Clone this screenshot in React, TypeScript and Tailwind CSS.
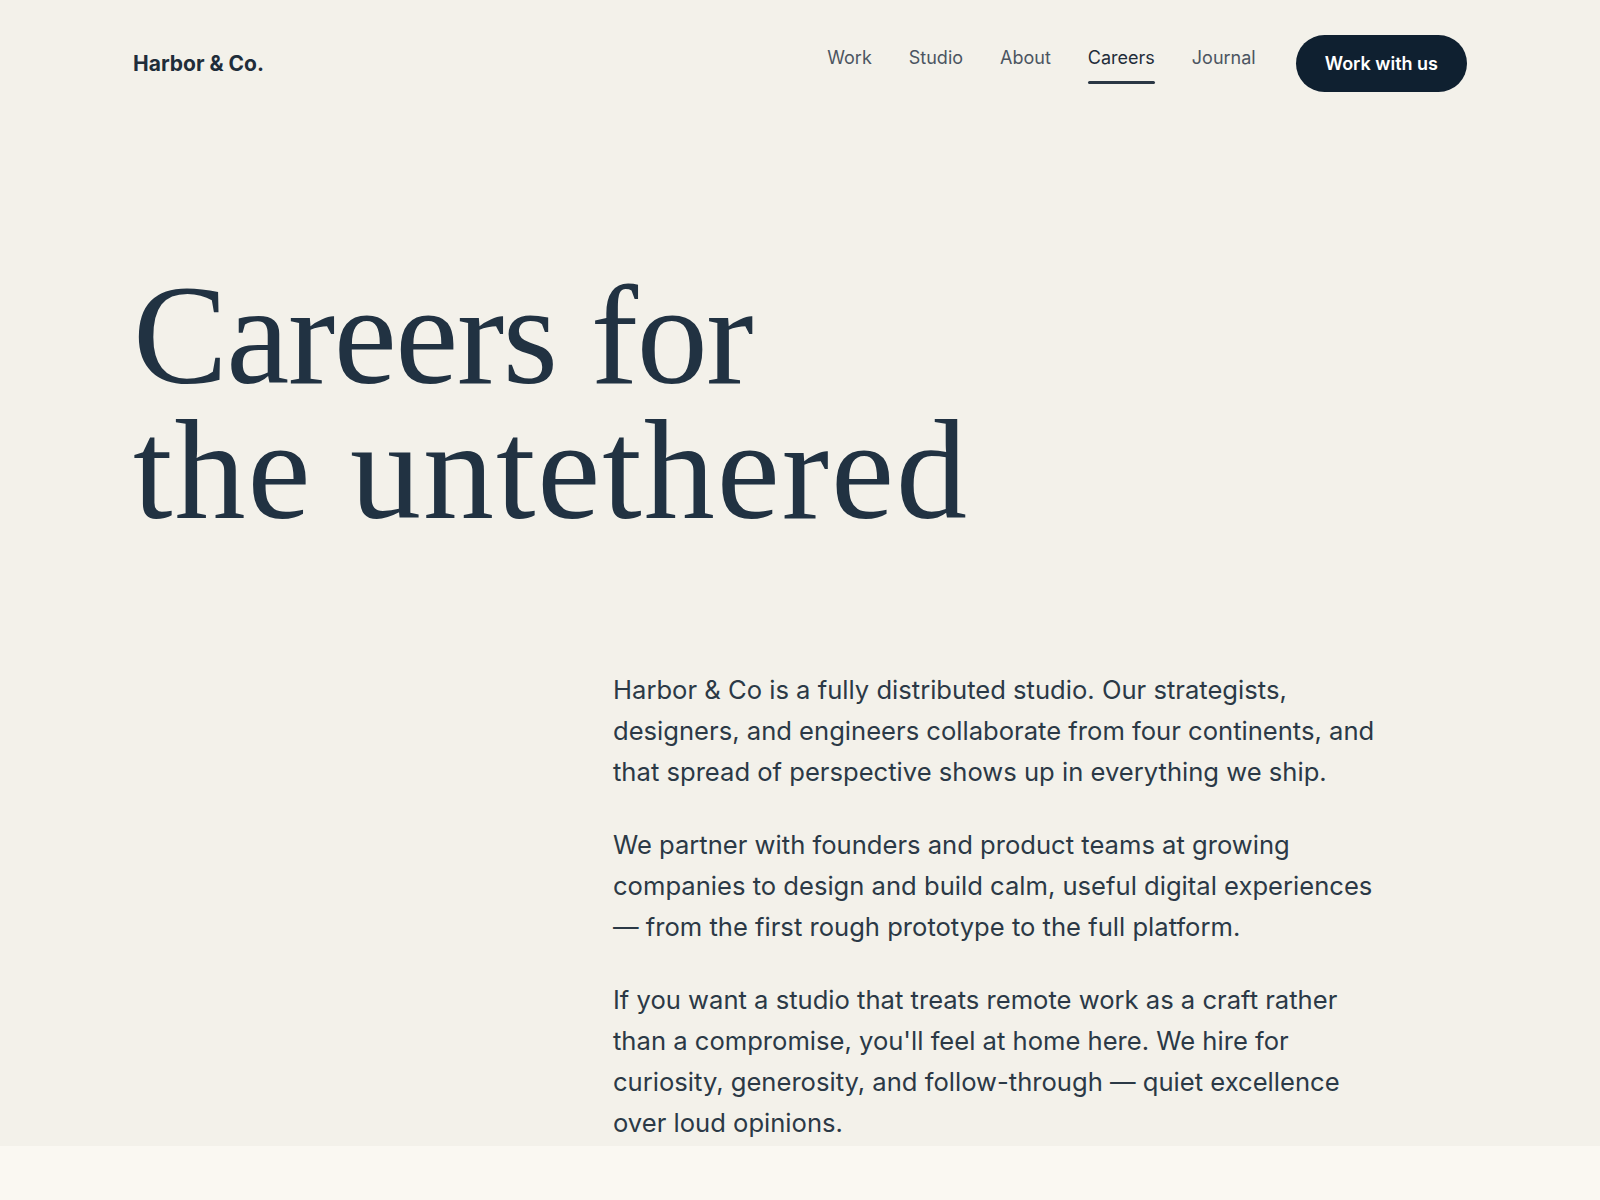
const navItems = ["Work", "Studio", "About", "Careers", "Journal"];

const paragraphs = [
  "Harbor & Co is a fully distributed studio. Our strategists, designers, and engineers collaborate from four continents, and that spread of perspective shows up in everything we ship.",
  "We partner with founders and product teams at growing companies to design and build calm, useful digital experiences — from the first rough prototype to the full platform.",
  "If you want a studio that treats remote work as a craft rather than a compromise, you'll feel at home here. We hire for curiosity, generosity, and follow-through — quiet excellence over loud opinions.",
];

function Header() {
  return (
    <header className="flex items-center justify-between px-[133px] py-[35px]">
      <a href="#" className="text-[21px] font-bold leading-7 text-[#1f2d3a]">
        Harbor &amp; Co.
      </a>
      <div className="flex items-center gap-10">
        <nav className="flex items-center gap-[37px]">
          {navItems.map((item) => {
            const active = item === "Careers";
            return (
              <a key={item} href="#" className="flex flex-col items-stretch pt-px">
                <span
                  className={`text-[18px] leading-7 ${
                    active ? "text-[#1f2d3a]" : "text-[#4b5561]"
                  }`}
                >
                  {item}
                </span>
                <span
                  className={`mt-[9px] h-[2.5px] rounded-full ${
                    active ? "bg-[#2a3744]" : "bg-transparent"
                  }`}
                />
              </a>
            );
          })}
        </nav>
        <a
          href="#"
          className="flex h-[57px] items-center rounded-full bg-[#0f2030] px-[29px] text-[18px] font-semibold leading-7 text-white"
        >
          Work with us
        </a>
      </div>
    </header>
  );
}

export default function App() {
  return (
    <div
      className="min-h-screen bg-[#faf8f2] text-[#22313f]"
      style={{ fontFamily: "Inter, 'Noto Sans', sans-serif" }}
    >
      <div className="bg-[#f3f1ea] pb-[3px]">
        <Header />
        <main className="px-[133px]">
          <h1
            className="pt-[141px] text-[142px] font-normal leading-[135px] text-[#213242]"
            style={{ fontFamily: "'Liberation Serif', 'Times New Roman', serif" }}
          >
            <span className="block tracking-[-0.01em]">Careers for</span>
            <span className="block tracking-[0.014em]">the untethered</span>
          </h1>
          <div className="mt-[131px] flex">
            <div className="w-[480px] shrink-0" />
            <div className="flex max-w-[766px] flex-col gap-8">
              {paragraphs.map((p, i) => (
                <p key={i} className="text-[25.6px] leading-[41px] text-[#2b3946]">
                  {p}
                </p>
              ))}
            </div>
          </div>
        </main>
      </div>
      <div className="h-[120px]" />
    </div>
  );
}
